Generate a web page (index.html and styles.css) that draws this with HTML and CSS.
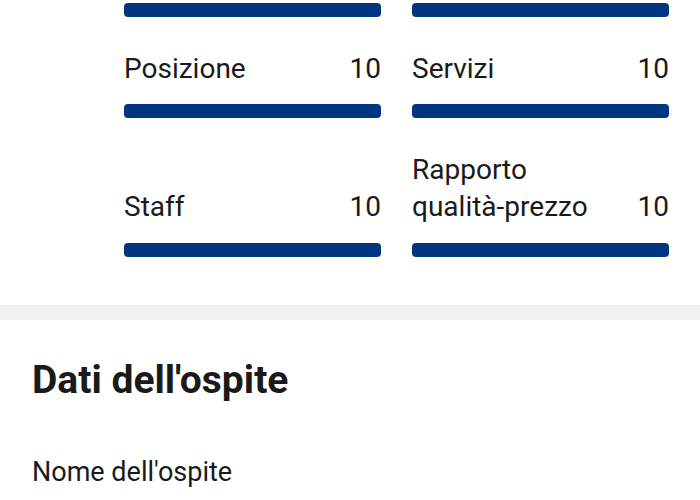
FILE: index.html
```html
<!DOCTYPE html>
<html lang="it">
<head>
<meta charset="utf-8">
<title>Punteggi</title>
<link rel="stylesheet" href="styles.css">
</head>
<body>
<div class="page">
  <section class="scores">
    <div class="cell">
      <div class="bar bar-top"></div>
    </div>
    <div class="cell">
      <div class="bar bar-top"></div>
    </div>
    <div class="cell">
      <div class="head"><span class="label">Posizione</span><span class="value">10</span></div>
      <div class="bar"></div>
    </div>
    <div class="cell">
      <div class="head"><span class="label">Servizi</span><span class="value">10</span></div>
      <div class="bar"></div>
    </div>
    <div class="cell">
      <div class="head"><span class="label">Staff</span><span class="value">10</span></div>
      <div class="bar"></div>
    </div>
    <div class="cell">
      <div class="head"><span class="label">Rapporto qualità-prezzo</span><span class="value">10</span></div>
      <div class="bar"></div>
    </div>
  </section>
  <div class="divider"></div>
  <section class="guest">
    <h2 class="title">Dati dell'ospite</h2>
    <p class="field">Nome dell'ospite</p>
  </section>
</div>
</body>
</html>
```
FILE: styles.css
```css
html, body {
  margin: 0;
  padding: 0;
  background: #ffffff;
}
body {
  font-family: Roboto, "Noto Sans", "Liberation Sans", sans-serif;
  color: #1a1a1a;
  width: 700px;
  overflow: hidden;
}
.scores {
  display: grid;
  grid-template-columns: 1fr 1fr;
  column-gap: 31px;
  row-gap: 32.5px;
  padding: 3px 31px 48px 124px;
}
.cell {
  display: flex;
  flex-direction: column;
}
.head {
  flex: 1;
  display: flex;
  justify-content: space-between;
  align-items: flex-end;
  font-size: 28px;
  line-height: 37.5px;
  gap: 12px;
}
.label {
  flex: 1;
}
.value {
  flex: none;
}
.bar {
  height: 14px;
  margin-top: 17px;
  border-radius: 4px;
  background: #003580;
}
.bar-top {
  margin-top: 0;
}
.divider {
  height: 14px;
  background: #f2f2f2;
  border-top: 1px solid #ececec;
}
.guest {
  padding: 38px 32px 0 32px;
}
.title {
  margin: 0;
  font-size: 39px;
  font-weight: 700;
  line-height: 45.6px;
}
.field {
  margin: 51px 0 0 0;
  font-size: 27px;
  line-height: 37.5px;
}
```
